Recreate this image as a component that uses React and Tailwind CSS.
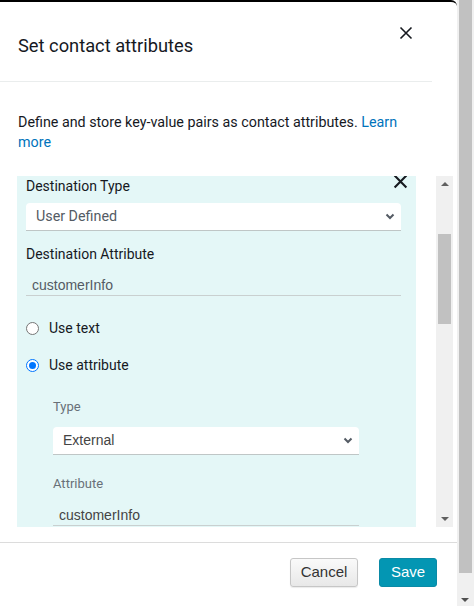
import React from "react";

const font = { fontFamily: "Roboto, 'Noto Sans', sans-serif" };
const arial = { fontFamily: "'Liberation Sans', Arial, sans-serif" };

function Chevron({ className }) {
  return (
    <svg width="10" height="7" viewBox="0 0 10 7" className={className}>
      <path d="M1.5 1.5 L5 5 L8.5 1.5" fill="none" stroke="#545b64" strokeWidth="2" />
    </svg>
  );
}

function XIcon({ size = 14, stroke = 1.8 }) {
  return (
    <svg width={size} height={size} viewBox="0 0 14 14">
      <path d="M1.5 1.5 L12.5 12.5 M12.5 1.5 L1.5 12.5" stroke="#16191f" strokeWidth={stroke} fill="none" />
    </svg>
  );
}

function Radio({ checked, label }) {
  return (
    <div className="flex items-center h-[20px]">
      {checked ? (
        <div className="w-[13px] h-[13px] rounded-full border-[1.5px] border-[#0075ff] flex items-center justify-center bg-white">
          <div className="w-[7px] h-[7px] rounded-full bg-[#0075ff]" />
        </div>
      ) : (
        <div className="w-[13px] h-[13px] rounded-full border border-[#767676] bg-white" />
      )}
      <span className="ml-[10px] text-[14px] text-[#16191f]">{label}</span>
    </div>
  );
}

export default function App() {
  return (
    <div className="w-[474px] h-[606px] flex overflow-hidden bg-white" style={font}>
      {/* dialog */}
      <div className="w-[457px] h-full flex flex-col border-t-2 border-black rounded-tr-[6px] bg-white">
        {/* header */}
        <div className="w-[432px] h-[80px] border-b border-[#eaeded] relative shrink-0">
          <div className="absolute left-[18px] top-[32px] text-[18.3px] leading-[24px] text-[#16191f]">
            Set contact attributes
          </div>
          <div className="absolute left-[399px] top-[24px]">
            <XIcon size={14} stroke={1.6} />
          </div>
        </div>
        {/* body */}
        <div className="flex-1 flex flex-col pl-[18px]">
          <p className="mt-[30px] w-[392px] text-[14.3px] leading-[20px] text-[#16191f]">
            Define and store key-value pairs as contact attributes.{" "}
            <span className="text-[#0073bb]">Learn more</span>
          </p>
          <div className="mt-[24px] flex">
            <div className="ml-[-1px] w-[399px] h-[351px] bg-[#e4f7f7] overflow-hidden relative pl-[9px] pr-[15px]">
              <div className="absolute right-[8px] top-[-2px]">
                <XIcon size={15} stroke={2} />
              </div>
              <div className="text-[14px] leading-[20px] text-[#16191f]">Destination Type</div>
              <div className="mt-[7px] h-[28px] bg-white rounded-t-[4px] border-b border-[#bfc6c6] flex items-center justify-between pl-[10px] pr-[6px]">
                <span className="text-[14.3px] text-[#545b64]">User Defined</span>
                <Chevron />
              </div>
              <div className="mt-[13px] text-[14px] leading-[20px] text-[#16191f]">Destination Attribute</div>
              <div className="h-[32px] border-b border-[#c9d0d0] flex items-end pl-[6px]">
                <span className="text-[14px] leading-[20px] text-[#545b64]" style={arial}>customerInfo</span>
              </div>
              <div className="mt-[22px]">
                <Radio label="Use text" />
              </div>
              <div className="mt-[17px]">
                <Radio checked label="Use attribute" />
              </div>
              <div className="pl-[27px]">
                <div className="mt-[22px] text-[13px] leading-[20px] text-[#687078]">Type</div>
                <div className="mt-[10px] w-[306px] h-[28px] bg-white rounded-t-[4px] border-b border-[#bfc6c6] flex items-center justify-between pl-[10px] pr-[6px]">
                  <span className="text-[14px] text-[#444]" style={arial}>External</span>
                  <Chevron />
                </div>
                <div className="mt-[19px] text-[13px] leading-[20px] text-[#687078]">Attribute</div>
                <div className="w-[306px] h-[32px] border-b border-[#c9d0d0] flex items-end pl-[6px]">
                  <span className="text-[14px] leading-[20px] text-[#444]" style={arial}>customerInfo</span>
                </div>
              </div>
            </div>
            {/* inner scrollbar */}
            <div className="ml-[20px] w-[17px] h-[351px] bg-[#f0f0f0] relative">
              <div className="absolute left-[5px] top-[6px] w-0 h-0 border-l-[4px] border-r-[4px] border-b-[4px] border-l-transparent border-r-transparent border-b-[#606060]" />
              <div className="absolute left-[2px] top-[58px] w-[13px] h-[90px] bg-[#c1c1c1]" />
              <div className="absolute left-[5px] bottom-[6px] w-0 h-0 border-l-[4px] border-r-[4px] border-t-[4px] border-l-transparent border-r-transparent border-t-[#606060]" />
            </div>
          </div>
        </div>
        {/* footer */}
        <div className="h-[64px] border-t border-[#dcdcdc] shrink-0 flex justify-end items-start pt-[15px] pr-[20px] gap-[21px]" style={arial}>
          <button className="w-[68px] h-[29px] rounded-[3px] border border-[#c6c6c6] bg-gradient-to-b from-[#fafafa] to-[#e8e8e8] text-[15px] text-[#333] shadow-[0_1px_1px_rgba(0,0,0,0.08)]">
            Cancel
          </button>
          <button className="w-[58px] h-[29px] rounded-[3px] border border-[#0a8aa6] bg-[#0396b3] text-[15px] text-white">
            Save
          </button>
        </div>
      </div>
      {/* outer scrollbar */}
      <div className="w-[17px] h-full bg-[#f0f0f0] relative">
        <div className="absolute left-[2px] top-0 w-[13px] h-[573px] bg-[#c1c1c1]" />
        <div className="absolute left-[4px] bottom-[4px] w-0 h-0 border-l-[4px] border-r-[4px] border-t-[4px] border-l-transparent border-r-transparent border-t-[#505050]" />
      </div>
    </div>
  );
}
